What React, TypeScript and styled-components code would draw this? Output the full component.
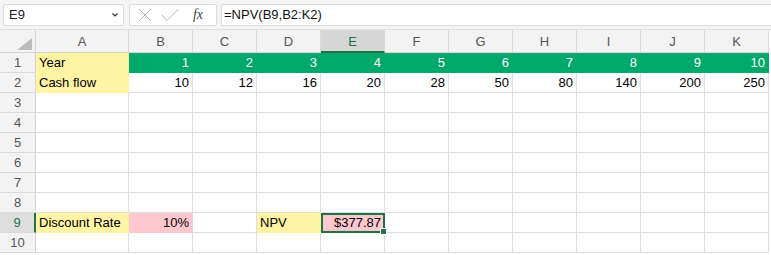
import React from "react";
import styled, { createGlobalStyle, css } from "styled-components";

const GlobalStyle = createGlobalStyle`
  html, body { margin: 0; padding: 0; background: #ffffff; }
  body { font-family: "Liberation Sans", Arial, sans-serif; }
`;

const GREEN = "#00A86B";
const YELLOW = "#FFF4A3";
const PINK = "#FFC7CE";
const SEL = "#217346";
const GRID = "#DEDEDE";

const Sheet = styled.div`
  width: 771px;
  height: 255px;
  overflow: hidden;
  background: #fff;
`;

const FormulaBar = styled.div`
  display: flex;
  align-items: center;
  height: 30px;
  padding: 0 0 0 3px;
  box-sizing: border-box;
  background: #f5f5f5;
  border-bottom: 1px solid #e2e2e2;
`;

const NameBox = styled.div`
  flex: 0 0 121px;
  height: 22px;
  box-sizing: border-box;
  background: #fff;
  border: 1px solid #dcdcdc;
  border-radius: 2px;
  display: flex;
  align-items: center;
  justify-content: space-between;
  padding: 0 4px 0 5px;
  font-size: 13px;
  color: #222;
`;

const IconBox = styled.div`
  flex: 0 0 88px;
  margin-left: 5px;
  height: 22px;
  box-sizing: border-box;
  background: #fff;
  border: 1px solid #dcdcdc;
  border-radius: 2px;
  display: flex;
  align-items: center;
  padding: 0 0 0 7px;
`;

const IconSlot = styled.span<{ $w: number }>`
  display: flex;
  align-items: center;
  justify-content: center;
  width: ${(p) => p.$w}px;
`;

const Fx = styled.span`
  font-family: "Liberation Serif", "Times New Roman", serif;
  font-style: italic;
  font-size: 14px;
  color: #444;
`;

const FormulaInput = styled.div`
  flex: 1;
  margin-left: 4px;
  height: 22px;
  box-sizing: border-box;
  background: #fff;
  border: 1px solid #dcdcdc;
  border-right: none;
  border-radius: 2px 0 0 2px;
  display: flex;
  align-items: center;
  padding-left: 2px;
  font-size: 13px;
  color: #111;
`;

const Grid = styled.div`
  display: grid;
  grid-template-columns: 36px 93px repeat(10, 64px);
  grid-template-rows: 23px repeat(10, 20px);
`;

const Corner = styled.div`
  background: #f3f3f3;
  border-right: 1px solid #d4d4d4;
  border-bottom: 1px solid #d4d4d4;
  display: flex;
  align-items: flex-end;
  justify-content: flex-end;
  padding: 0 3px 2px 0;
`;

const ColHead = styled.div<{ $active?: boolean }>`
  background: #f3f3f3;
  border-right: 1px solid #dadada;
  border-bottom: 1px solid #d4d4d4;
  display: flex;
  align-items: center;
  justify-content: center;
  font-size: 13px;
  color: #555;
  padding-top: 1px;
  ${(p) =>
    p.$active &&
    css`
      background: #d6d6d6;
      color: ${SEL};
      border-bottom: 2px solid ${SEL};
    `}
`;

const RowHead = styled.div<{ $active?: boolean }>`
  background: #f3f3f3;
  border-right: 1px solid #d4d4d4;
  border-bottom: 1px solid #dadada;
  display: flex;
  align-items: center;
  justify-content: center;
  font-size: 13px;
  color: #555;
  ${(p) =>
    p.$active &&
    css`
      background: #dedede;
      color: ${SEL};
      border-right: 2px solid ${SEL};
    `}
`;

const Cell = styled.div<{ $fill?: string; $align?: "left" | "right"; $selected?: boolean }>`
  position: relative;
  box-sizing: border-box;
  background: ${(p) => p.$fill ?? "#fff"};
  border-right: 1px solid ${(p) => p.$fill ?? GRID};
  border-bottom: 1px solid ${(p) => p.$fill ?? GRID};
  color: ${(p) => (p.$fill === GREEN ? "#fff" : "#000")};
  font-size: 13px;
  display: flex;
  align-items: center;
  justify-content: ${(p) => (p.$align === "right" ? "flex-end" : "flex-start")};
  padding: 0 3px;
  white-space: nowrap;
  ${(p) =>
    p.$selected &&
    css`
      outline: 2px solid ${SEL};
      outline-offset: -2px;
      z-index: 1;
      &::after {
        content: "";
        position: absolute;
        right: -3px;
        bottom: -3px;
        width: 5px;
        height: 5px;
        background: ${SEL};
        border: 1px solid #fff;
      }
    `}
`;

const cols = ["A", "B", "C", "D", "E", "F", "G", "H", "I", "J", "K"];

type CellData = { v?: string; fill?: string; align?: "left" | "right" };

function buildRows(): CellData[][] {
  const rows: CellData[][] = [];
  for (let r = 0; r < 10; r++) rows.push(cols.map(() => ({})));
  rows[0][0] = { v: "Year", fill: YELLOW };
  rows[1][0] = { v: "Cash flow", fill: YELLOW };
  const flows = [10, 12, 16, 20, 28, 50, 80, 140, 200, 250];
  for (let i = 0; i < 10; i++) {
    rows[0][i + 1] = { v: String(i + 1), fill: GREEN, align: "right" };
    rows[1][i + 1] = { v: String(flows[i]), align: "right" };
  }
  rows[8][0] = { v: "Discount Rate", fill: YELLOW };
  rows[8][1] = { v: "10%", fill: PINK, align: "right" };
  rows[8][3] = { v: "NPV", fill: YELLOW };
  rows[8][4] = { v: "$377.87", fill: PINK, align: "right" };
  return rows;
}

export default function App() {
  const rows = buildRows();
  return (
    <>
      <GlobalStyle />
      <Sheet>
        <FormulaBar>
          <NameBox>
            <span>E9</span>
            <svg width="8" height="6" viewBox="0 0 8 6">
              <path d="M1.5 1.5 L4 4 L6.5 1.5" fill="none" stroke="#333" strokeWidth="1.2" />
            </svg>
          </NameBox>
          <IconBox>
            <IconSlot $w={16}>
              <svg width="14" height="14" viewBox="0 0 14 14">
                <path d="M1 1 L13 13 M13 1 L1 13" stroke="#b4b4b4" strokeWidth="1" fill="none" />
              </svg>
            </IconSlot>
            <IconSlot $w={34}>
              <svg width="18" height="14" viewBox="0 0 18 14">
                <path d="M1 7 L6 12.5 L17 1.5" stroke="#b4b4b4" strokeWidth="1" fill="none" />
              </svg>
            </IconSlot>
            <IconSlot $w={22}>
              <Fx>fx</Fx>
            </IconSlot>
          </IconBox>
          <FormulaInput>=NPV(B9,B2:K2)</FormulaInput>
        </FormulaBar>
        <Grid>
          <Corner>
            <svg width="15" height="12" viewBox="0 0 15 12">
              <path d="M15 0 L15 12 L0 12 Z" fill="#bdbdbd" />
            </svg>
          </Corner>
          {cols.map((c) => (
            <ColHead key={c} $active={c === "E"}>
              {c}
            </ColHead>
          ))}
          {rows.map((row, r) => (
            <React.Fragment key={r}>
              <RowHead $active={r === 8}>{r + 1}</RowHead>
              {row.map((cell, c) => (
                <Cell
                  key={c}
                  $fill={cell.fill}
                  $align={cell.align}
                  $selected={r === 8 && c === 4}
                >
                  {cell.v}
                </Cell>
              ))}
            </React.Fragment>
          ))}
        </Grid>
      </Sheet>
    </>
  );
}
